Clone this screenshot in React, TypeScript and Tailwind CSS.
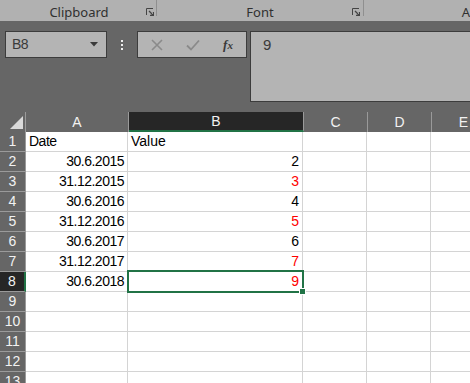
import React from "react";

const cols = [
  { name: "A", w: 103 },
  { name: "B", w: 175 },
  { name: "C", w: 64 },
  { name: "D", w: 64 },
  { name: "E", w: 64 },
];

const rows: { a: string; b: string; red?: boolean; left?: boolean }[] = [
  { a: "Date", b: "Value", left: true },
  { a: "30.6.2015", b: "2" },
  { a: "31.12.2015", b: "3", red: true },
  { a: "30.6.2016", b: "4" },
  { a: "31.12.2016", b: "5", red: true },
  { a: "30.6.2017", b: "6" },
  { a: "31.12.2017", b: "7", red: true },
  { a: "30.6.2018", b: "9", red: true },
  { a: "", b: "" },
  { a: "", b: "" },
  { a: "", b: "" },
  { a: "", b: "" },
  { a: "", b: "" },
];

function Launcher() {
  return (
    <svg width="8" height="8" viewBox="0 0 8 8">
      <path d="M0.5 7V0.5H7" stroke="#444" strokeWidth="1" fill="none" />
      <path d="M3 3L7.5 7.5M4 7.5H7.5V4" stroke="#444" strokeWidth="1.3" fill="none" />
    </svg>
  );
}

export default function App() {
  const cellFont = { fontFamily: '"Liberation Sans", Arial, sans-serif' };
  return (
    <div
      className="w-[470px] h-[383px] overflow-hidden bg-[#666666] flex flex-col"
      style={{ fontFamily: '"Noto Sans", "Open Sans", sans-serif' }}
    >
      {/* Ribbon group labels */}
      <div className="h-[21px] bg-[#b1b1b1] flex shrink-0 text-[13px] text-[#303030]">
        <div className="w-[157px] shrink-0 flex items-start pt-[4px] relative border-r border-[#8f8f8f] h-[16px]">
          <span className="flex-1 text-center pl-[2px] leading-[16px]">Clipboard</span>
          <span className="absolute left-[146px] top-[8px]"><Launcher /></span>
        </div>
        <div className="w-[207px] shrink-0 flex items-start pt-[4px] relative border-r border-[#8f8f8f] h-[16px]">
          <span className="flex-1 text-center leading-[16px]">Font</span>
          <span className="absolute left-[195px] top-[8px]"><Launcher /></span>
        </div>
        <div className="w-[106px] shrink-0 pt-[4px] leading-[16px] text-right">A</div>
      </div>

      {/* Formula bar area */}
      <div className="h-[91px] shrink-0 flex items-start pt-[10px] pl-[5px]">
        <div className="w-[102px] shrink-0 h-[27px] bg-[#b4b4b4] border border-[#3c3c3c] flex items-center justify-between pl-[6px] pr-[8px] text-[14px] text-[#3a3a3a]">
          <span style={cellFont} className="tracking-[-0.5px]">B8</span>
          <svg width="8" height="5" viewBox="0 0 8 5"><path d="M0 0H8L4 4.5Z" fill="#3a3a3a" /></svg>
        </div>
        <div className="w-[30px] shrink-0 h-[27px] flex flex-col items-center justify-center gap-[2px]">
          <div className="w-[2px] h-[2px] bg-[#eeeeee]" />
          <div className="w-[2px] h-[2px] bg-[#eeeeee]" />
          <div className="w-[2px] h-[2px] bg-[#eeeeee]" />
        </div>
        <div className="w-[110px] shrink-0 h-[27px] bg-[#b4b4b4] border border-[#3c3c3c] flex items-center">
          <div className="w-[38px] flex justify-center">
            <svg width="12" height="12" viewBox="0 0 12 12"><path d="M1 1L11 11M11 1L1 11" stroke="#8a8a8a" strokeWidth="1.6" /></svg>
          </div>
          <div className="w-[34px] flex justify-center">
            <svg width="14" height="12" viewBox="0 0 14 12"><path d="M1 6.5L5 10.5L13 1.5" stroke="#8a8a8a" strokeWidth="1.8" fill="none" /></svg>
          </div>
          <div className="w-[36px] flex justify-center">
            <span className="text-[13px] italic font-bold text-[#3a3a3a]" style={{ fontFamily: '"Liberation Serif", serif' }}>
              f<span className="text-[11px]">x</span>
            </span>
          </div>
        </div>
        <div className="ml-[3px] w-[240px] shrink-0 h-[71px] bg-[#b4b4b4] border border-[#3c3c3c] pl-[12px] pt-[2px] text-[15px] text-[#3a3a3a]" style={cellFont}>
          9
        </div>
      </div>

      {/* Column headers */}
      <div className="h-[20px] shrink-0 flex" style={cellFont}>
        <div className="w-[26px] shrink-0 border-r border-[#9a9a9a] relative">
          <svg className="absolute left-[10px] top-[4px]" width="13" height="13" viewBox="0 0 13 13">
            <path d="M13 0V13H0Z" fill="#d9d9d9" />
          </svg>
        </div>
        {cols.map((c) => {
          const sel = c.name === "B";
          return (
            <div
              key={c.name}
              className={
                sel
                  ? "shrink-0 bg-[#262626] border-b-2 border-[#217346] flex items-center justify-center text-[14px] text-[#f2f2f2] border-r border-r-[#9a9a9a]"
                  : "shrink-0 border-r border-[#9a9a9a] flex items-center justify-center text-[14px] text-[#f2f2f2]"
              }
              style={{ width: c.w }}
            >
              {c.name}
            </div>
          );
        })}
      </div>

      {/* Rows */}
      <div className="flex flex-col bg-white" style={cellFont}>
        {rows.map((r, i) => {
          const n = i + 1;
          const sel = n === 8;
          return (
            <div key={n} className="h-[20px] shrink-0 flex">
              <div
                className={
                  sel
                    ? "w-[26px] shrink-0 bg-[#262626] border-r-2 border-r-[#217346] border-b border-b-[#9a9a9a] flex items-center justify-center text-[14px] text-[#f2f2f2]"
                    : "w-[26px] shrink-0 bg-[#666666] border-r border-r-[#9a9a9a] border-b border-b-[#9a9a9a] flex items-center justify-center text-[14px] text-[#f2f2f2]"
                }
              >
                {n}
              </div>
              <div
                className={
                  "w-[102px] shrink-0 border-r border-b border-[#d4d4d4] flex items-center text-[14px] tracking-[-0.5px] text-black px-[3px] " +
                  (r.left ? "justify-start" : "justify-end")
                }
              >
                {r.a}
              </div>
              <div
                className={
                  "w-[175px] shrink-0 border-r border-b border-[#d4d4d4] flex items-center text-[14px] px-[3px] relative " +
                  (r.left ? "justify-start " : "justify-end ") +
                  (r.red ? "text-[#ff0000]" : "text-black")
                }
              >
                {r.b}
                {sel && (
                  <>
                    <div className="absolute z-10 -left-[1px] -top-[2px] w-[177px] h-[23px] border-2 border-[#217346]" />
                    <div className="absolute z-20 -right-[4px] -bottom-[4px] w-[7px] h-[7px] bg-[#217346] border border-white" />
                  </>
                )}
              </div>
              <div className="w-[64px] shrink-0 border-r border-b border-[#d4d4d4]" />
              <div className="w-[64px] shrink-0 border-r border-b border-[#d4d4d4]" />
              <div className="w-[64px] shrink-0 border-r border-b border-[#d4d4d4]" />
            </div>
          );
        })}
      </div>
    </div>
  );
}
